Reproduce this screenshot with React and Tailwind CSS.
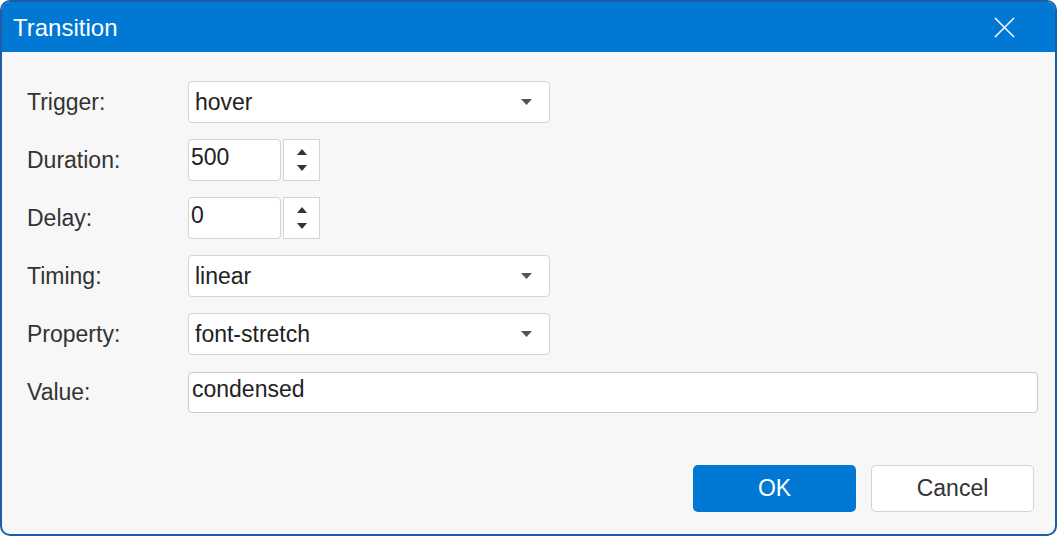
import React from 'react';

const font = { fontFamily: '"Liberation Sans", Arial, sans-serif' };

const Caret = () => (
  <svg width="11" height="6" viewBox="0 0 11 6" className="shrink-0">
    <path d="M0 0h11L5.5 6z" fill="#555" />
  </svg>
);

const Select = ({ value }) => (
  <div className="w-[362px] h-[42px] rounded-[4px] border border-[#d4d4d4] bg-white flex items-center justify-between pl-[6px] pr-[17px] text-[23px] leading-[26px] text-[#222]">
    <span>{value}</span>
    <Caret />
  </div>
);

const Spin = ({ value }) => (
  <div className="flex gap-[2px]">
    <div className="w-[93px] h-[42px] rounded-[4px] border border-[#d4d4d4] bg-white pl-[2px] pt-[4px] text-[23px] leading-[26px] text-[#222]">
      {value}
    </div>
    <div className="w-[37px] h-[42px] border border-[#d4d4d4] bg-white flex flex-col items-center justify-center gap-[10px]">
      <svg width="10" height="6" viewBox="0 0 10 6"><path d="M5 0l5 6H0z" fill="#333" /></svg>
      <svg width="10" height="6" viewBox="0 0 10 6"><path d="M0 0h10L5 6z" fill="#333" /></svg>
    </div>
  </div>
);

const Row = ({ label, children }) => (
  <div className="flex items-center h-[42px]">
    <div className="w-[161px] text-[23px] leading-[26px] text-[#333]">{label}</div>
    {children}
  </div>
);

export default function App() {
  return (
    <div style={font} className="w-[1057px] h-[536px] rounded-[10px] border-2 border-[#1b5ea5] bg-[#f7f7f7] overflow-hidden flex flex-col">
      {/* title bar */}
      <div className="h-[50px] bg-[#0078d4] flex items-center justify-between pl-[11px] pr-[40px] shrink-0">
        <span className="text-white text-[24px] leading-[28px] pt-[2px]">Transition</span>
        <svg width="21" height="21" viewBox="0 0 21 21">
          <path d="M1 1l19 19M20 1L1 20" stroke="#fff" strokeWidth="1.6" />
        </svg>
      </div>

      {/* form */}
      <div className="flex-1 flex flex-col pt-[29px] pl-[25px] pr-[17px]">
        <div className="flex flex-col gap-[16px]">
          <Row label="Trigger:"><Select value="hover" /></Row>
          <Row label="Duration:"><Spin value="500" /></Row>
          <Row label="Delay:"><Spin value="0" /></Row>
          <Row label="Timing:"><Select value="linear" /></Row>
          <Row label="Property:"><Select value="font-stretch" /></Row>
          <Row label="Value:">
            <div className="flex-1 h-[41px] rounded-[4px] border border-[#c8c8c8] bg-white pl-[3px] pt-[3px] text-[23px] leading-[26px] text-[#222]">
              condensed
            </div>
          </Row>
        </div>

        <div className="mt-auto mb-[22px] mr-[4px] flex justify-end gap-[15px]">
          <button className="w-[163px] h-[47px] rounded-[5px] bg-[#0078d4] text-white text-[23px]">OK</button>
          <button className="w-[163px] h-[47px] rounded-[5px] border border-[#d4d4d4] bg-white text-[#333] text-[23px]">Cancel</button>
        </div>
      </div>
    </div>
  );
}
